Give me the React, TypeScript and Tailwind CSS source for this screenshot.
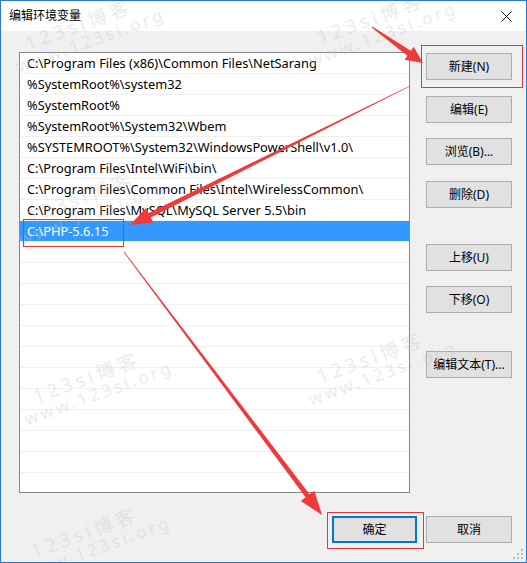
import React from "react";

const paths = [
  "C:\\Program Files (x86)\\Common Files\\NetSarang",
  "%SystemRoot%\\system32",
  "%SystemRoot%",
  "%SystemRoot%\\System32\\Wbem",
  "%SYSTEMROOT%\\System32\\WindowsPowerShell\\v1.0\\",
  "C:\\Program Files\\Intel\\WiFi\\bin\\",
  "C:\\Program Files\\Common Files\\Intel\\WirelessCommon\\",
  "C:\\Program Files\\MySQL\\MySQL Server 5.5\\bin",
  "C:\\PHP-5.6.15",
];

const font = { fontFamily: '"Noto Sans", "Noto Sans CJK SC", sans-serif' };

function Btn({ label, className = "" }: { label: string; className?: string }) {
  return (
    <div
      className={`h-[27px] w-[86px] flex items-center justify-center bg-[#e1e1e1] border border-[#adadad] text-[12px] text-black ${className}`}
    >
      {label}
    </div>
  );
}

// tapered arrow polygon: thin tail, fat head
function arrow(tx: number, ty: number, hx: number, hy: number, tw: number, sw: number, hl: number, hw: number) {
  const dx = hx - tx;
  const dy = hy - ty;
  const len = Math.hypot(dx, dy);
  const ux = dx / len;
  const uy = dy / len;
  const px = -uy;
  const py = ux;
  const bx = hx - ux * hl;
  const by = hy - uy * hl;
  const pts = [
    [tx + px * tw / 2, ty + py * tw / 2],
    [bx + px * sw / 2, by + py * sw / 2],
    [bx + px * hw / 2, by + py * hw / 2],
    [hx, hy],
    [bx - px * hw / 2, by - py * hw / 2],
    [bx - px * sw / 2, by - py * sw / 2],
    [tx - px * tw / 2, ty - py * tw / 2],
  ];
  return pts.map((p) => p.join(",")).join(" ");
}

function Watermark({ x, y }: { x: number; y: number }) {
  return (
    <div
      className="absolute pointer-events-none text-[#c8c8c8] opacity-35 leading-none"
      style={{ left: x, top: y, transform: "rotate(-20deg)", ...font }}
    >
      <div className="text-[19px] tracking-[4px] pl-[16px]">123si博客</div>
      <div className="text-[17px] tracking-[3px]">www.123si.org</div>
    </div>
  );
}

export default function App() {
  const rows = Array.from({ length: 21 });
  return (
    <div
      className="relative w-[527px] h-[563px] border border-[#2b79d0] bg-[#f0f0f0] flex flex-col overflow-hidden"
      style={font}
    >
      {/* title bar */}
      <div className="h-[30px] bg-white flex items-center justify-between pl-[8px] pr-[14px]">
        <span className="text-[12px] text-black">编辑环境变量</span>
        <svg width="11" height="11" viewBox="0 0 11 11">
          <path d="M0.5 0.5 L10.5 10.5 M10.5 0.5 L0.5 10.5" stroke="#111" strokeWidth="1" />
        </svg>
      </div>

      <div className="flex pl-[18px] pr-[14px] pt-[21px] gap-[16px]">
        {/* list */}
        <div className="w-[391px] h-[441px] bg-white border border-[#828790] overflow-hidden">
          {rows.map((_, i) => {
            const text = paths[i] ?? "";
            const selected = i === 8;
            return (
              <div
                key={i}
                className={`h-[21px] flex items-center pl-[7px] pt-[2px] text-[12.8px] whitespace-nowrap border-b border-[#f0f0f0] ${
                  selected ? "bg-[#3399ff] text-white" : "text-black"
                }`}
              >
                {text}
              </div>
            );
          })}
        </div>

        {/* side buttons */}
        <div className="flex flex-col pt-[1px]">
          <Btn label="新建(N)" />
          <Btn label="编辑(E)" className="mt-[16px]" />
          <Btn label="浏览(B)..." className="mt-[15px]" />
          <Btn label="删除(D)" className="mt-[16px]" />
          <Btn label="上移(U)" className="mt-[36px]" />
          <Btn label="下移(O)" className="mt-[15px]" />
          <Btn label="编辑文本(T)..." className="mt-[38px]" />
        </div>
      </div>

      {/* bottom buttons */}
      <div className="flex justify-end gap-[9px] pr-[14px] pt-[23px]">
        <div className="h-[27px] w-[85px] flex items-center justify-center bg-[#e1e1e1] border-2 border-[#0078d7] text-[12px] text-black">
          确定
        </div>
        <Btn label="取消" />
      </div>

      {/* resize grip */}
      <svg className="absolute right-[3px] bottom-[3px]" width="10" height="10" viewBox="0 0 10 10">
        {[
          [8, 0],
          [8, 4],
          [4, 4],
          [8, 8],
          [4, 8],
          [0, 8],
        ].map(([x, y], i) => (
          <rect key={i} x={x} y={y} width="2" height="2" fill="#bcbcbc" />
        ))}
      </svg>

      {/* watermarks */}
      <Watermark x={8} y={12} />
      <Watermark x={300} y={6} />
      <Watermark x={10} y={185} />
      <Watermark x={300} y={345} />
      <Watermark x={16} y={365} />
      <Watermark x={14} y={520} />

      {/* annotation boxes */}
      <div className="absolute left-[420px] top-[44px] w-[102px] h-[43px] border border-[#e5363a]" />
      <div className="absolute left-[22px] top-[218px] w-[101px] h-[28px] border border-[#e5363a]" />
      <div className="absolute left-[326px] top-[511px] w-[97px] h-[37px] border border-[#e5363a]" />

      {/* arrows */}
      <svg className="absolute left-[-1px] top-[-1px] pointer-events-none" width="527" height="563">
        <polygon points={arrow(372, 27, 423, 63, 1, 6, 17, 16)} fill="#f03a3a" />
        <polygon points={arrow(410, 86, 130, 225, 0.5, 5, 22, 16)} fill="#f03a3a" />
        <polygon points={arrow(124, 252, 322, 515, 0.8, 5, 24, 17)} fill="#f03a3a" />
      </svg>
    </div>
  );
}
